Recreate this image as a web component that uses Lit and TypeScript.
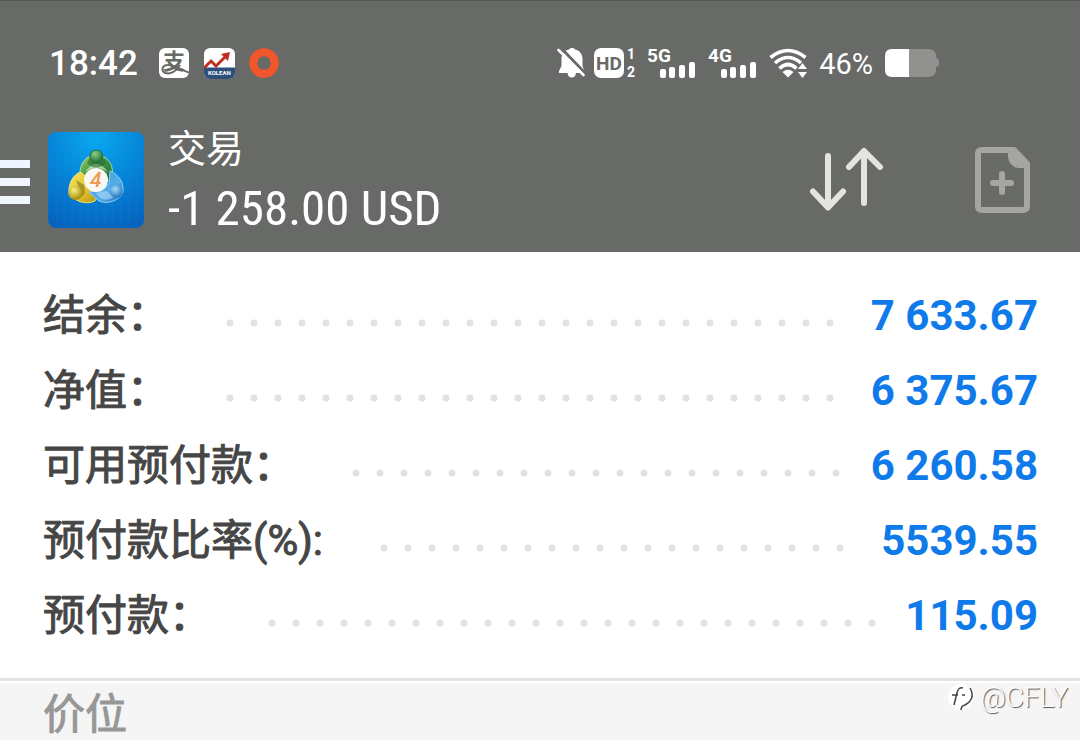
import { LitElement, html, css, svg } from "lit";
import { customElement, property } from "lit/decorators.js";

interface Figure {
  label: string;
  value: string;
}

const FIGURES: Figure[] = [
  { label: "结余：", value: "7 633.67" },
  { label: "净值：", value: "6 375.67" },
  { label: "可用预付款：", value: "6 260.58" },
  { label: "预付款比率(%):", value: "5539.55" },
  { label: "预付款：", value: "115.09" },
];

@customElement("status-bar")
export class StatusBar extends LitElement {
  static styles = css`
    :host {
      display: flex;
      align-items: center;
      justify-content: space-between;
      height: 30px;
      padding: 48px 141px 0 49px;
      color: #fff;
      font-family: Roboto, "Noto Sans CJK SC", sans-serif;
    }
    .group {
      display: flex;
      align-items: center;
    }
    .left {
      gap: 15px;
    }
    .right {
      gap: 12px;
    }
    .time {
      font-size: 35px;
      line-height: 30px;
      font-weight: 500;
      margin-right: 6px;
      padding-top: 2px;
    }
    .percent {
      font-size: 29px;
      line-height: 30px;
      padding-top: 2px;
    }
    svg {
      display: block;
      flex: none;
      overflow: visible;
    }
    .volte {
      margin: 0 -3px;
    }
    .hd {
      font: 700 19px Roboto, sans-serif;
    }
    .sim {
      font: 700 14px Roboto, sans-serif;
    }
    .net {
      font: 700 19px Roboto, sans-serif;
    }
    .pay {
      font: 700 22px "Noto Sans CJK SC", sans-serif;
    }
    .tiny {
      font: 700 6px Roboto, sans-serif;
    }
  `;

  private signal(name: string) {
    return html`<svg width="49" height="30" viewBox="0 0 49 30" role="img" aria-label=${name}>
      ${svg`<text class="net" x="0" y="14" fill="#fff">${name}</text>
      <g fill="#fff">
        <rect x="13" y="21" width="6" height="9" rx="2"/>
        <rect x="22" y="19" width="6" height="11" rx="2"/>
        <rect x="32" y="17" width="6" height="13" rx="2"/>
        <rect x="42" y="14" width="6" height="16" rx="2"/>
      </g>`}
    </svg>`;
  }

  render() {
    return html`
      <div class="group left">
        <span class="time">18:42</span>
        <svg width="30" height="30" viewBox="0 0 30 30" role="img" aria-label="Alipay">
          <rect width="30" height="30" rx="6" fill="#fff" />
          <text class="pay" x="4" y="21" fill="#686a67">支</text>
          <path d="M21 17C17 24 11 26.500 6.500 25C1.500 23 3 17 9 17C15 17 22 21.500 30 24.500" fill="none" stroke="#686a67" stroke-width="2" />
        </svg>
        <svg width="31" height="31" viewBox="0 0 31 31" role="img" aria-label="Chart">
          <defs><clipPath id="tile"><rect width="31" height="31" rx="6" /></clipPath></defs>
          <g clip-path="url(#tile)">
            <rect width="31" height="31" fill="#fff" />
            <rect y="19.500" width="31" height="12" fill="#2c4f7c" />
            <path d="M0 20L7 13L12 18L22 8" fill="none" stroke="#bd3020" stroke-width="3" />
            <path d="M17 6L26 4L24 13Z" fill="#bd3020" />
            <text class="tiny" x="4" y="27" fill="#fff">KOLEAN</text>
          </g>
        </svg>
        <svg width="30" height="30" viewBox="0 0 30 30" role="img" aria-label="Recording">
          <circle cx="14" cy="15" r="10.800" fill="none" stroke="#f2562c" stroke-width="8" />
        </svg>
      </div>
      <div class="group right">
        <svg width="27" height="30" viewBox="0 0 27 30" role="img" aria-label="Muted">
          <path d="M14 0C15.500 0 16.500 0.500 17 1.500C22 2.500 24.500 6.500 24.500 11V18L26.500 23V25H18C17.500 28 16 29.500 13.700 29.500C11.500 29.500 10 28 9.500 25H1V23L3.500 18V11C3.500 6.500 6 2.500 11 1.500C11.500 0.500 12.500 0 14 0Z" fill="#fff" />
          <path d="M2 -1L28 26" stroke="#686a67" stroke-width="3" />
          <path d="M0.500 2L25.500 27" stroke="#fff" stroke-width="2.600" stroke-linecap="round" />
        </svg>
        <svg class="volte" width="44" height="30" viewBox="0 0 44 30" role="img" aria-label="HD 1 2">
          <rect width="30" height="30" rx="7" fill="#fff" />
          <text class="hd" x="2" y="22" fill="#686a67">HD</text>
          <text class="sim" x="33" y="11" fill="#fff">1</text>
          <text class="sim" x="33" y="29" fill="#fff">2</text>
        </svg>
        ${this.signal("5G")} ${this.signal("4G")}
        <svg width="38" height="30" viewBox="0 0 38 30" role="img" aria-label="Wi-Fi">
          <g fill="none" stroke="#fff" stroke-width="3.600">
            <path d="M1.500 9.500Q19 -4.500 36.500 9.500" />
            <path d="M6 15Q19 4 32 15" />
            <path d="M10.500 20.500Q19 12.500 27.500 20.500" />
          </g>
          <path d="M13.500 24Q19 19.500 24.500 24L19 29.500Z" fill="#fff" />
          <path d="M33.500 15L38 21H29ZM33.500 30L29 24H38Z" fill="#fff" />
        </svg>
        <span class="percent">46%</span>
        <svg width="54" height="28" viewBox="0 0 54 28" role="img" aria-label="Battery">
          <path d="M24 0H43Q51 0 51 7V9Q54 9 54 14Q54 18 51 18V21Q51 28 43 28H24Z" fill="#919290" />
          <path d="M24 0H7Q0 0 0 7V21Q0 28 7 28H24Z" fill="#fff" />
        </svg>
      </div>
    `;
  }
}

@customElement("trade-header")
export class TradeHeader extends LitElement {
  static styles = css`
    :host {
      display: flex;
      align-items: center;
      padding: 39px 50px 9px 0;
      color: #fff;
      font-family: Roboto, "Noto Sans CJK SC", sans-serif;
    }
    button {
      display: block;
      flex: none;
      margin: 0;
      padding: 0;
      border: 0;
      background: none;
      cursor: pointer;
    }
    svg {
      display: block;
    }
    .logo {
      flex: none;
      margin: 0 24px 0 18px;
    }
    .heading {
      flex: 1;
      min-width: 0;
    }
    h1,
    p {
      margin: 0;
      font-weight: 400;
      white-space: nowrap;
    }
    h1 {
      font-family: "Noto Sans CJK SC", sans-serif;
      font-size: 38px;
      line-height: 58px;
    }
    p {
      font-family: "Roboto Condensed", "Liberation Sans Narrow", Roboto, sans-serif;
      font-size: 49px;
      line-height: 68px;
    }
    .actions {
      display: flex;
      align-items: center;
      gap: 90px;
    }
    .four {
      font: italic 500 21px Roboto, sans-serif;
    }
  `;

  render() {
    return html`
      <button aria-label="Menu">
        <svg width="30" height="48" viewBox="0 0 30 48" fill="#f0f6ff">
          <rect y="4" width="30" height="8" />
          <rect y="22" width="30" height="8" />
          <rect y="40" width="30" height="8" />
        </svg>
      </button>
      <svg class="logo" width="96" height="96" viewBox="0 0 96 96" role="img" aria-label="MetaTrader 4">
        <defs>
          <radialGradient id="sky" cx="0.5" cy="0.05" r="1">
            <stop offset="0" stop-color="#08a8f0" />
            <stop offset="0.5" stop-color="#0584d8" />
            <stop offset="1" stop-color="#0563bf" />
          </radialGradient>
          <pattern id="grid" width="8" height="8" patternUnits="userSpaceOnUse">
            <path d="M8 0H0V8" fill="none" stroke="#5bc0ff" stroke-opacity="0.080" />
          </pattern>
          <linearGradient id="green" x2="1" y2="1">
            <stop offset="0" stop-color="#9bd477" />
            <stop offset="0.5" stop-color="#3d9440" />
            <stop offset="1" stop-color="#1d6a35" />
          </linearGradient>
          <linearGradient id="yellow" x2="1" y2="1">
            <stop offset="0" stop-color="#f6e65e" />
            <stop offset="0.6" stop-color="#e0c02a" />
            <stop offset="1" stop-color="#a98e18" />
          </linearGradient>
          <linearGradient id="blue" x2="1" y2="1">
            <stop offset="0" stop-color="#3b8fdc" />
            <stop offset="0.6" stop-color="#56aee8" />
            <stop offset="1" stop-color="#1b6bb8" />
          </linearGradient>
          <radialGradient id="gball" cx="0.4" cy="0.3" r="0.7">
            <stop offset="0" stop-color="#8fd080" />
            <stop offset="1" stop-color="#1a6d38" />
          </radialGradient>
          <radialGradient id="yball" cx="0.4" cy="0.3" r="0.7">
            <stop offset="0" stop-color="#fbf07e" />
            <stop offset="1" stop-color="#a58a10" />
          </radialGradient>
          <radialGradient id="bball" cx="0.4" cy="0.3" r="0.7">
            <stop offset="0" stop-color="#a5dcfa" />
            <stop offset="1" stop-color="#2377bd" />
          </radialGradient>
        </defs>
        <rect width="96" height="96" rx="8" fill="url(#sky)" />
        <rect width="96" height="96" rx="8" fill="url(#grid)" />
        <g stroke-width="1">
          <path d="M42 24C34 28 31 36 32 46L40 44L48 40L61 49C67 42 65 28 54 24Z" fill="url(#green)" stroke="#a9dc9a" />
          <path d="M33 40C25 42 20 52 21 62C28 70 38 73 47 69L51 62L42 56L39 46Z" fill="url(#yellow)" stroke="#f0e27a" />
          <path d="M62 39C71 43 76 50 75 60C72 68 60 73 51 69L41 60L53 59L61 52Z" fill="url(#blue)" stroke="#8fd0f8" />
          <path d="M37 40Q48 24 60 40Q48 32 37 40Z" fill="#d3eec0" stroke="none" opacity="0.700" />
          <path d="M39 31Q48 40 58 31L56 27Q48 34 41 27Z" fill="#1c5c31" stroke="none" opacity="0.500" />
          <path d="M58 59L66 65Q60 69 54 67L47 61Z" fill="#c0e6ff" stroke="none" opacity="0.500" />
          <path d="M28 48L36 53L37 61L34 65Z" fill="#756713" stroke="none" opacity="0.550" />
        </g>
        <circle cx="48.300" cy="24.500" r="6.500" fill="url(#gball)" stroke="#256d38" />
        <circle cx="27.300" cy="61" r="7" fill="url(#yball)" />
        <circle cx="68.300" cy="59.500" r="6.300" fill="url(#bball)" />
        <circle cx="48" cy="48" r="12" fill="#faf8f4" />
        <text class="four" x="42" y="55" fill="#ee9a55">4</text>
      </svg>
      <div class="heading">
        <h1 lang="zh-CN">交易</h1>
        <p>-1 258.00 USD</p>
      </div>
      <div class="actions">
        <button aria-label="Sort">
          <svg width="76" height="66" viewBox="0 0 76 66" fill="none" stroke="#e3e4e2" stroke-width="6" stroke-linecap="round" stroke-linejoin="round">
            <path d="M19 9V60M4 44.500L19 60.500L34 44.500" />
            <path d="M55 56V5M40 20L55 4L71 20" />
          </svg>
        </button>
        <button aria-label="New order">
          <svg width="55" height="66" viewBox="0 0 55 66">
            <path d="M7 3H39L52 16.500V59Q52 63 48 63H7Q3 63 3 59V7Q3 3 7 3Z" fill="none" stroke="#a5a6a4" stroke-width="6" stroke-linejoin="round" />
            <path d="M33 3H40L52 16V21H43Q34 19 33 10Z" fill="#a5a6a4" />
            <path d="M27 27V45M18 36H36" stroke="#a5a6a4" stroke-width="6" stroke-linecap="round" />
          </svg>
        </button>
      </div>
    `;
  }
}

@customElement("account-figures")
export class AccountFigures extends LitElement {
  @property({ attribute: false }) figures: Figure[] = [];

  static styles = css`
    :host {
      display: block;
      padding: 26px 42px 25px 43px;
      background: #fff;
      font-size: 42px;
      line-height: 75px;
    }
    dl,
    dt,
    dd {
      margin: 0;
    }
    .row {
      display: flex;
      gap: 26px;
    }
    dt {
      flex: 1;
      display: flex;
      gap: 43px;
      color: #464646;
      font-family: Roboto, "Noto Sans CJK SC", sans-serif;
      font-weight: 400;
      -webkit-text-stroke: 1px #464646;
      white-space: nowrap;
    }
    dt::after {
      content: "";
      flex: 1;
      background: radial-gradient(circle at 18px 45px, #e2e2e2 3px, transparent 4px) 0 0 / 24px 75px
        repeat-x;
    }
    dd {
      color: #0f7aea;
      font-family: Roboto, sans-serif;
      font-weight: 700;
      white-space: nowrap;
    }
  `;

  render() {
    return html`<dl lang="zh-CN">
      ${this.figures.map(
        (f) => html`<div class="row"><dt>${f.label}</dt><dd>${f.value}</dd></div>`
      )}
    </dl>`;
  }
}

@customElement("app-root")
export class AppRoot extends LitElement {
  static styles = css`
    :host {
      display: flex;
      flex-direction: column;
      position: relative;
      min-height: 100vh;
      background: #f5f5f6;
      font-family: Roboto, "Noto Sans CJK SC", sans-serif;
    }
    header {
      background: #686a67;
      box-shadow: inset 0 1px #555753;
    }
    h2 {
      margin: 0;
      padding: 0 43px;
      border-top: 3px solid #e3e3e3;
      box-shadow: inset 0 2px #fff;
      color: #979797;
      font-family: "Noto Sans CJK SC", sans-serif;
      font-size: 42px;
      line-height: 59px;
      font-weight: 400;
      -webkit-text-stroke: 1px #979797;
    }
    .mark {
      position: absolute;
      right: 12px;
      bottom: 26px;
      display: flex;
      align-items: center;
      gap: 4px;
      color: #fff;
      font-size: 28px;
      line-height: 32px;
      font-weight: 300;
      text-shadow: 1px 1px 1px #555;
    }
    .mark svg {
      display: block;
    }
  `;

  render() {
    return html`
      <header>
        <status-bar></status-bar>
        <trade-header></trade-header>
      </header>
      <account-figures .figures=${FIGURES}></account-figures>
      <h2 lang="zh-CN">价位</h2>
      <div class="mark">
        <svg width="28" height="30" viewBox="0 0 28 30">
          <circle cx="13" cy="14" r="13" fill="#fff" />
          <path d="M15 5Q10 4 9 10L6 22M4 12L10 12M14 12H17M22 5Q28 16 17 22Q13 23 13 27" fill="none" stroke="#444" stroke-width="1.500" />
        </svg>
        <span>@CFLY</span>
      </div>
    `;
  }
}
